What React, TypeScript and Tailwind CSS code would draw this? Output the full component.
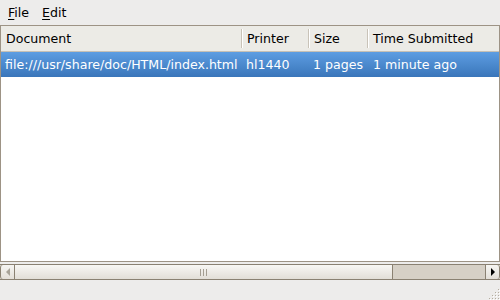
import React from "react";

function Grip() {
  const dots: [number, number][] = [];
  for (let r = 0; r < 4; r++) {
    for (let c = 0; c <= r; c++) {
      dots.push([12 - c * 3, 3 + r * 3]);
    }
  }
  return (
    <svg width="14" height="14" viewBox="0 0 14 14">
      {dots.map(([x, y], i) => (
        <g key={i}>
          <rect x={x} y={y} width="1" height="1" fill="#b4ad9f" />
          <rect x={x + 1} y={y + 1} width="1" height="1" fill="#ffffff" />
        </g>
      ))}
    </svg>
  );
}

export default function App() {
  return (
    <div
      className="w-[500px] h-[300px] bg-[#edeceb] flex flex-col text-[12.6px] text-black overflow-hidden"
      style={{ fontFamily: '"DejaVu Sans", sans-serif' }}
    >
      {/* menubar */}
      <div className="h-[25px] flex items-center pt-[2px] pl-[8px] gap-[13px] shrink-0">
        <span>
          <span className="underline underline-offset-2">F</span>ile
        </span>
        <span>
          <span className="underline underline-offset-2">E</span>dit
        </span>
      </div>

      {/* tree view frame */}
      <div className="h-[237px] shrink-0 border border-[#9d9385] bg-white flex flex-col">
        {/* header */}
        <div className="h-[26px] shrink-0 flex bg-[#ecebe6] border-b border-[#c6c0b5]">
          <div className="w-[240px] flex items-center pl-[5px] pt-[2px]">Document</div>
          <div className="flex items-center w-[67px]">
            <div className="w-[2px] h-[19px] border-l border-[#c9c3b8] bg-white" />
            <span className="pl-[4px] pt-[2px]">Printer</span>
          </div>
          <div className="flex items-center w-[59px]">
            <div className="w-[2px] h-[19px] border-l border-[#c9c3b8] bg-white" />
            <span className="pl-[4px] pt-[2px]">Size</span>
          </div>
          <div className="flex items-center flex-1">
            <div className="w-[2px] h-[19px] border-l border-[#c9c3b8] bg-white" />
            <span className="pl-[4px] pt-[2px]">Time Submitted</span>
          </div>
        </div>
        {/* row */}
        <div className="h-[25px] shrink-0 flex items-center pt-[1px] text-white bg-gradient-to-b from-[#5d9de2] to-[#3a76ba] whitespace-nowrap">
          <div className="w-[240px] pl-[4px]">file:///usr/share/doc/HTML/index.html</div>
          <div className="w-[67px] pl-[5px]">hl1440</div>
          <div className="w-[59px] pl-[5px]">1 pages</div>
          <div className="flex-1 pl-[6px]">1 minute ago</div>
        </div>
        <div className="flex-1" />
      </div>

      {/* horizontal scrollbar */}
      <div className="mt-[2px] h-[16px] shrink-0 flex border-y border-[#8a8172] bg-[#d6d0c6]">
        <div className="w-[15px] shrink-0 flex items-center justify-center border-r border-[#8a8172] border-l rounded-l-[3px] bg-gradient-to-b from-[#f6f5f2] to-[#e3dfd8]">
          <svg width="6" height="8" viewBox="0 0 6 8">
            <polygon points="5,0 5,8 1,4" fill="#a8a398" />
          </svg>
        </div>
        <div className="w-[378px] shrink-0 flex items-center justify-center border-r border-[#8a8172] bg-gradient-to-b from-[#f8f7f4] to-[#e2ded7]">
          <svg width="8" height="7" viewBox="0 0 8 7">
            <rect x="0" y="0" width="1" height="7" fill="#a49e92" />
            <rect x="3" y="0" width="1" height="7" fill="#a49e92" />
            <rect x="6" y="0" width="1" height="7" fill="#a49e92" />
          </svg>
        </div>
        <div className="flex-1" />
        <div className="w-[15px] shrink-0 flex items-center justify-center border-l border-r border-[#8a8172] rounded-r-[3px] bg-gradient-to-b from-[#f6f5f2] to-[#e3dfd8]">
          <svg width="6" height="8" viewBox="0 0 6 8">
            <polygon points="1,0 1,8 5,4" fill="#000000" />
          </svg>
        </div>
      </div>

      <div className="flex-1 flex justify-end items-end">
        <Grip />
      </div>
    </div>
  );
}
